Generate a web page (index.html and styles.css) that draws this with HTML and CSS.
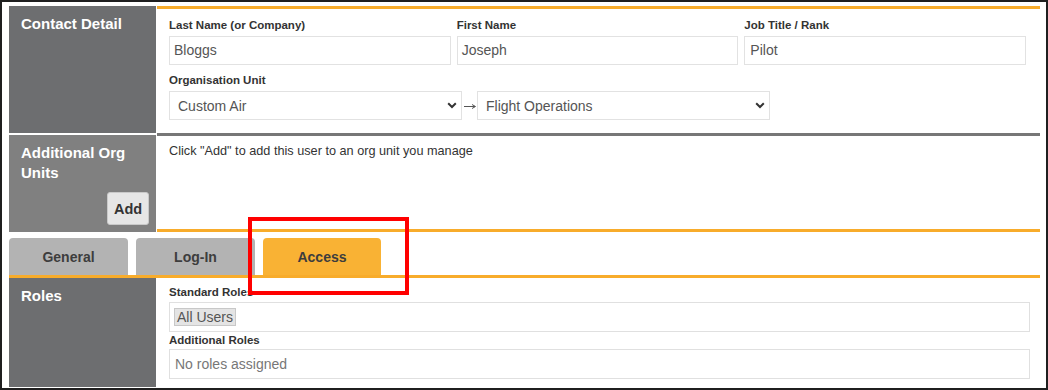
FILE: index.html
```html
<!DOCTYPE html>
<html>
<head>
<meta charset="utf-8">
<link rel="stylesheet" href="styles.css">
</head>
<body>
<div class="frame">
  <section class="row row-contact">
    <div class="side side-dark"><h2 class="side-title">Contact Detail</h2></div>
    <div class="main main-orange-top">
      <div class="fields3">
        <div class="field">
          <label class="lbl">Last Name (or Company)</label>
          <div class="input">Bloggs</div>
        </div>
        <div class="field">
          <label class="lbl">First Name</label>
          <div class="input">Joseph</div>
        </div>
        <div class="field">
          <label class="lbl">Job Title / Rank</label>
          <div class="input input-job">Pilot</div>
        </div>
      </div>
      <label class="lbl lbl-org">Organisation Unit</label>
      <div class="org-row">
        <div class="select"><span>Custom Air</span>
          <svg class="chev" width="10" height="7" viewBox="0 0 10 7"><path d="M1.2 1.3 L5 5 L8.8 1.3" fill="none" stroke="#333" stroke-width="2"/></svg>
        </div>
        <span class="arrow">
          <svg width="12" height="7" viewBox="0 0 12 7"><path d="M0 3.5 H11" stroke="#555" stroke-width="1"/><path d="M8 1.5 L11.5 3.5 L8 5.5" fill="none" stroke="#555" stroke-width="1"/></svg>
        </span>
        <div class="select"><span>Flight Operations</span>
          <svg class="chev" width="10" height="7" viewBox="0 0 10 7"><path d="M1.2 1.3 L5 5 L8.8 1.3" fill="none" stroke="#333" stroke-width="2"/></svg>
        </div>
      </div>
    </div>
  </section>

  <section class="row row-org">
    <div class="side side-mid side-org">
      <h2 class="side-title">Additional Org Units</h2>
      <button class="btn-add">Add</button>
    </div>
    <div class="main main-org">
      <p class="hint">Click "Add" to add this user to an org unit you manage</p>
    </div>
  </section>

  <nav class="tabs">
    <div class="tab">General</div>
    <div class="tab">Log-In</div>
    <div class="tab tab-active">Access</div>
  </nav>

  <section class="row row-roles">
    <div class="side side-dark"><h2 class="side-title">Roles</h2></div>
    <div class="main main-roles">
      <label class="lbl">Standard Roles</label>
      <div class="rolebox"><span class="chip">All Users</span></div>
      <label class="lbl lbl-add">Additional Roles</label>
      <div class="rolebox rolebox-empty">No roles assigned</div>
    </div>
  </section>

  <div class="highlight"></div>
</div>
</body>
</html>
```

FILE: styles.css
```css
html, body {
  margin: 0;
  padding: 0;
  background: #fff;
}
body {
  font-family: "Liberation Sans", Arial, sans-serif;
  color: #333;
}
.frame {
  position: relative;
  width: 1048px;
  height: 390px;
  box-sizing: border-box;
  border: 2px solid #1f1f1f;
  padding: 4px 6px 0 7px;
  display: flex;
  flex-direction: column;
  overflow: hidden;
}
.row {
  display: grid;
  grid-template-columns: 147px 1fr;
  column-gap: 1px;
}
.side {
  box-sizing: border-box;
  padding: 8px 12px;
}
.side-dark { background: #6d6e70; }
.side-mid { background: #808080; }
.side-title {
  margin: 0;
  color: #fff;
  font-size: 15px;
  line-height: 20px;
  font-weight: bold;
}
.main { box-sizing: border-box; }
.main-orange-top {
  border-top: 3px solid #f8ac2b;
  padding: 8px 14px 13px 12px;
}
.fields3 {
  display: grid;
  grid-template-columns: 1fr 1fr 1fr;
  column-gap: 6px;
}
.lbl {
  display: block;
  font-size: 11.5px;
  line-height: 16px;
  font-weight: bold;
  color: #333;
  margin-bottom: 3px;
}
.lbl-org { margin-top: 7px; }
.input {
  box-sizing: border-box;
  height: 29px;
  border: 1px solid #e2e2e2;
  padding: 0 4px;
  font-size: 14px;
  line-height: 27px;
  color: #555;
}
.input-job { padding-left: 5px; }
.org-row {
  display: flex;
  align-items: center;
}
.select {
  box-sizing: border-box;
  width: 293px;
  height: 29px;
  border: 1px solid #e2e2e2;
  padding: 0 4px 0 8px;
  display: flex;
  align-items: center;
  justify-content: space-between;
  font-size: 14px;
  color: #555;
}
.arrow {
  width: 15px;
  display: flex;
  justify-content: center;
  padding-top: 1px;
}
.row-org .side-org { margin-top: 2px; }
.side-org {
  display: flex;
  flex-direction: column;
  justify-content: space-between;
  align-items: flex-start;
  padding: 8px 7px 7px 12px;
}
.btn-add {
  align-self: flex-end;
  width: 42px;
  height: 33px;
  box-sizing: border-box;
  background: #e6e6e6;
  border: 1px solid #c9c9c9;
  border-radius: 3px;
  font-family: "Liberation Sans", Arial, sans-serif;
  font-size: 14.5px;
  font-weight: bold;
  color: #333;
  padding: 0;
}
.main-org {
  border-top: 3px solid #777;
  border-bottom: 3px solid #f8ac2b;
  padding: 7px 12px 0;
  height: 99px;
}
.hint {
  margin: 0;
  font-size: 12.7px;
  line-height: 16px;
  color: #333;
}
.tabs {
  display: flex;
  gap: 8px;
  padding-top: 6px;
  border-bottom: 3px solid #f8ac2b;
}
.tab {
  width: 119px;
  height: 37px;
  box-sizing: border-box;
  background: #b3b3b3;
  border-radius: 4px 4px 0 0;
  display: flex;
  align-items: center;
  justify-content: center;
  font-size: 14px;
  font-weight: bold;
  color: #3d3d3d;
}
.tab-active {
  background: #f9b234;
  width: 118px;
}
.row-roles {
  flex: 1;
  margin-bottom: 1px;
}
.main-roles {
  padding: 6px 10px 0 12px;
}
.main-roles .lbl { margin-bottom: 2px; }
.main-roles .lbl-add { margin-bottom: 1px; }
.rolebox {
  box-sizing: border-box;
  height: 30px;
  border: 1px solid #e0e0e0;
  padding: 0 4px;
  display: flex;
  align-items: center;
  font-size: 14px;
  color: #555;
}
.chip {
  background: #e4e4e4;
  border: 1px solid #c8c8c8;
  padding: 0 2px;
  line-height: 16px;
  color: #555;
}
.rolebox-empty {
  color: #777;
  padding-left: 5px;
}
.highlight {
  position: absolute;
  left: 246px;
  top: 215px;
  width: 161px;
  height: 78px;
  box-sizing: border-box;
  border: 4px solid #ff0000;
  pointer-events: none;
}
```
